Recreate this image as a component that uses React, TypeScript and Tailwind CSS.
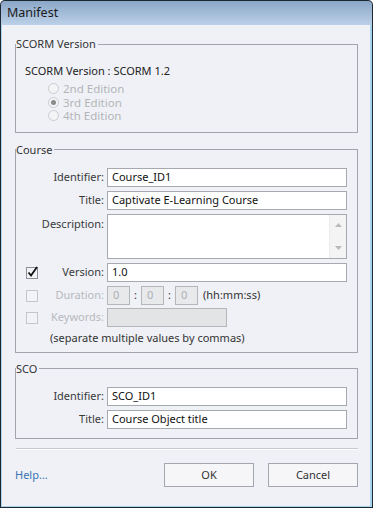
import React from "react";

const font = { fontFamily: '"Noto Sans", "Open Sans", Arial, sans-serif' };

function Radio({ checked, label }: { checked?: boolean; label: string }) {
  return (
    <div className="flex items-center h-[13.5px] leading-[13px] ml-[32px]">
      <span className="w-[11px] h-[11px] rounded-full border border-[#c9cbd0] bg-[#f3f4f6] flex items-center justify-center">
        {checked && <span className="w-[5px] h-[5px] rounded-full bg-[#8a8a8a]" />}
      </span>
      <span className="ml-[4px] text-[#b3b5b8] text-[11.5px]">{label}</span>
    </div>
  );
}

function Box({ checked }: { checked?: boolean }) {
  return (
    <svg width="13" height="13" viewBox="0 0 13 13" className="shrink-0">
      <rect x="0.5" y="1.5" width="11" height="11" fill="#f2f3f6" stroke={checked ? "#8c8f96" : "#c3c6cc"} />
      {checked && (
        <path d="M2.5 6.5 L5 9.5 L11 1" fill="none" stroke="#111" strokeWidth="1.8" />
      )}
    </svg>
  );
}

function Row({
  label,
  children,
  check,
  checked,
  disabled,
  top,
  className = "",
}: {
  label: string;
  children: React.ReactNode;
  check?: boolean;
  checked?: boolean;
  disabled?: boolean;
  top?: boolean;
  className?: string;
}) {
  return (
    <div className={"flex pl-[10px] " + (top ? "items-start " : "items-center ") + className}>
      <div className={"w-[78px] flex items-center justify-between " + (top ? "pt-[3px]" : "")}>
        <span>{check ? <Box checked={checked} /> : null}</span>
        <span className={disabled ? "text-[#b7b9bd]" : "text-[#3a3a3a]"}>{label}</span>
      </div>
      <div className="ml-[3px] flex items-center">{children}</div>
    </div>
  );
}

function Input({ value, w = "w-[240px]" }: { value: string; w?: string }) {
  return (
    <div className={"h-[19px] border border-[#a6a9b0] bg-white pl-[4px] flex items-center text-[#111] " + w}>
      {value}
    </div>
  );
}

function Legend({ children }: { children: React.ReactNode }) {
  return <legend className="pr-[2px] leading-[16px] text-[#333]">{children}</legend>;
}

function TimeBox() {
  return (
    <div className="w-[23px] h-[19px] border border-[#b4b6ba] bg-[#e8e9eb] pl-[5px] flex items-center text-[#aeb0b4]">
      0
    </div>
  );
}

export default function App() {
  return (
    <div
      className="w-[373px] h-[508px] bg-[#1e2830] rounded-t-[5px] p-[1px] flex flex-col text-[11px] leading-[14px]"
      style={font}
    >
      <div className="h-[24px] rounded-t-[4px] bg-gradient-to-b from-[#8ba7c7] to-[#bcd0e8] flex items-center pl-[6px] text-[12.5px] text-[#1a1a1a]">
        Manifest
      </div>
      <div className="flex-1 bg-[#eff1f6] border-l border-r-2 border-b border-[#a7d3ef] px-[13px] pr-[12px] flex flex-col">
        {/* SCORM Version */}
        <fieldset className="mt-[11px] border border-[#a3a5ad] pb-[9px]">
          <Legend>SCORM Version</Legend>
          <div className="pl-[9px] mt-[11px] leading-[16px] text-[#222]">SCORM Version : SCORM 1.2</div>
          <div className="pl-[0px] mt-[3px]">
            <Radio label="2nd Edition" />
            <Radio label="3rd Edition" checked />
            <Radio label="4th Edition" />
          </div>
        </fieldset>

        {/* Course */}
        <fieldset className="mt-[9px] border border-[#a3a5ad] pb-[7px]">
          <Legend>Course</Legend>
          <div className="mt-[10px] flex flex-col gap-[4px]">
            <Row label="Identifier:">
              <Input value="Course_ID1" />
            </Row>
            <Row label="Title:">
              <Input value="Captivate E-Learning Course" />
            </Row>
            <Row label="Description:" top>
              <div className="w-[240px] h-[45px] border border-[#a6a9b0] bg-white flex justify-end">
                <div className="w-[17px] h-full bg-[#f4f4f5] border-l border-[#ececee] flex flex-col items-center justify-between py-[8px]">
                  <svg width="7" height="4" viewBox="0 0 7 4">
                    <path d="M0 4 L3.5 0 L7 4 Z" fill="#b8babe" />
                  </svg>
                  <svg width="7" height="4" viewBox="0 0 7 4">
                    <path d="M0 0 L3.5 4 L7 0 Z" fill="#b8babe" />
                  </svg>
                </div>
              </div>
            </Row>
            <Row label="Version:" check checked>
              <Input value="1.0" />
            </Row>
            <Row label="Duration:" check disabled>
              <div className="flex items-center">
                <TimeBox />
                <span className="w-[11px] text-center text-[#333]">:</span>
                <TimeBox />
                <span className="w-[11px] text-center text-[#333]">:</span>
                <TimeBox />
                <span className="ml-[5px] text-[#333]">(hh:mm:ss)</span>
              </div>
            </Row>
            <Row label="Keywords:" check disabled className="-mt-[1px]">
              <div className="w-[120px] h-[19px] border border-[#b4b6ba] bg-[#e3e4e6]" />
            </Row>
          </div>
          <div className="pl-[34px] mt-[4px] text-[#333]">(separate multiple values by commas)</div>
        </fieldset>

        {/* SCO */}
        <fieldset className="mt-[8px] border border-[#a3a5ad] pb-[9px]">
          <Legend>SCO</Legend>
          <div className="mt-[10px] flex flex-col gap-[4px]">
            <Row label="Identifier:">
              <Input value="SCO_ID1" />
            </Row>
            <Row label="Title:">
              <Input value="Course Object title" />
            </Row>
          </div>
        </fieldset>

        <div className="mt-[9px] ml-[1px] h-[2px] border-t border-[#c6c9d0] border-b border-b-white" />

        <div className="mt-[13px] flex items-center">
          <span className="text-[#3b74b0]">Help...</span>
          <div className="ml-auto flex gap-[14px]">
            <button className="w-[90px] h-[24px] border border-[#a3a6ae] bg-[#f6f6f8] text-[#333]">OK</button>
            <button className="w-[90px] h-[24px] border border-[#a3a6ae] bg-[#f6f6f8] text-[#333]">Cancel</button>
          </div>
        </div>
      </div>
    </div>
  );
}
